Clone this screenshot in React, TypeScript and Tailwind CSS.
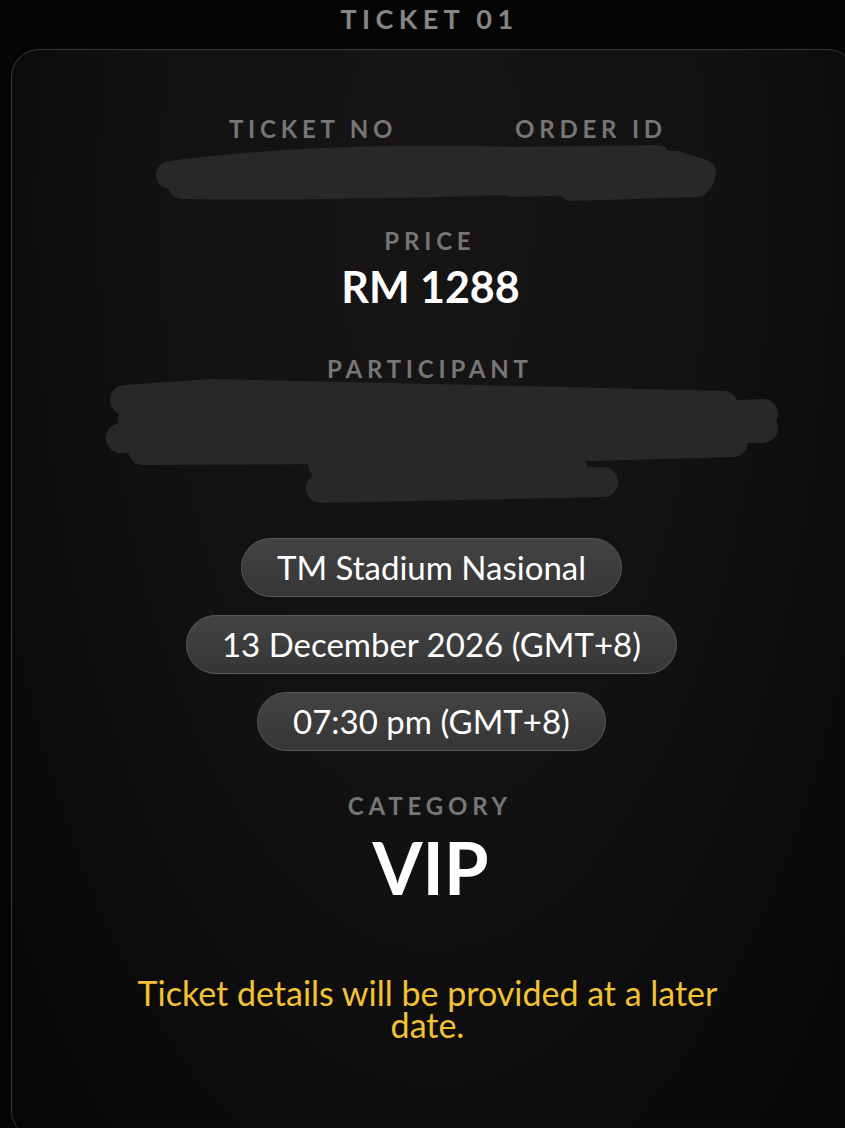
import type { FC } from 'react';

const font = { fontFamily: 'Lato, "Noto Sans", sans-serif' };

// scribbled-out value, drawn as a few fat strokes
const Redaction: FC<{ w: number; h: number; strokes: string[]; sw: number }> = ({ w, h, strokes, sw }) => (
  <svg width={w} height={h} viewBox={`0 0 ${w} ${h}`} className="block">
    {strokes.map((d, i) => (
      <path key={i} d={d} stroke="#282828" strokeWidth={sw} strokeLinecap="round" strokeLinejoin="round" fill="none" />
    ))}
  </svg>
);

const Label: FC<{ children: string }> = ({ children }) => (
  <div className="text-[24px] leading-none font-bold tracking-[0.2em] text-[#767676] uppercase pl-[0.2em]">
    {children}
  </div>
);

const Pill: FC<{ children: string }> = ({ children }) => (
  <div className="h-[59px] px-[35px] flex items-center justify-center rounded-full border border-[#5a5a5a] bg-[linear-gradient(180deg,#434343_0%,#363636_100%)] text-[33px] text-white whitespace-nowrap">
    {children}
  </div>
);

export default function App() {
  return (
    <div className="h-[1128px] overflow-hidden bg-[#050505] flex flex-col items-center" style={font}>
      {/* header */}
      <div className="pt-[5px] text-[27px] leading-none font-bold tracking-[0.2em] text-[#868686] pl-[14px]">
        TICKET 01
      </div>

      {/* ticket card */}
      <div className="mt-[17px] self-start ml-[11px] w-[845px] h-[1090px] shrink-0 rounded-[28px] border border-[#383838] bg-[radial-gradient(ellipse_at_50%_15%,#171414_0%,#121212_45%,#0a0a0b_80%,#060607_100%)] flex flex-col items-center pt-[67px] pr-[12px]">
        <div className="flex justify-center gap-[113px] pl-[36px]">
          <Label>Ticket No</Label>
          <Label>Order ID</Label>
        </div>
        <div className="mt-[2px] ml-[14px]">
          <Redaction
            w={566}
            h={60}
            sw={28}
            strokes={[
              'M18 32 C120 18 260 14 360 18 L505 16',
              'M30 42 C150 44 300 40 420 36',
              'M350 22 L525 22 L550 30',
              'M360 40 L520 36 L548 36',
              'M420 44 L545 40',
            ]}
          />
        </div>

        <div className="mt-[26px]">
          <Label>Price</Label>
        </div>
        <div className="mt-[12px] ml-[6px] text-[43px] leading-none font-bold text-white">RM 1288</div>

        <div className="mt-[49px]">
          <Label>Participant</Label>
        </div>
        <div className="-mt-[3px] ml-[30px]">
          <Redaction
            w={680}
            h={126}
            sw={30}
            strokes={[
              'M22 22 L110 16 L460 24 L620 28',
              'M30 42 C200 44 420 46 660 36',
              'M18 60 C200 58 420 58 640 50 L660 50',
              'M40 72 L420 70 L630 64',
              'M220 86 L460 82',
              'M230 98 L470 92',
              'M218 110 L500 104',
            ]}
          />
        </div>

        <div className="mt-[34px] ml-[8px] flex flex-col items-center gap-[18px]">
          <Pill>TM Stadium Nasional</Pill>
          <Pill>13 December 2026 (GMT+8)</Pill>
          <Pill>07:30 pm (GMT+8)</Pill>
        </div>

        <div className="mt-[43px]">
          <Label>Category</Label>
        </div>
        <div className="mt-[13px] ml-[6px] text-[72px] leading-none font-bold text-white">VIP</div>

        <div className="mt-[74px] w-[610px] text-center text-[34px] leading-[32px] text-[#f3c234]">
          Ticket details will be provided at a later date.
        </div>
      </div>
    </div>
  );
}
